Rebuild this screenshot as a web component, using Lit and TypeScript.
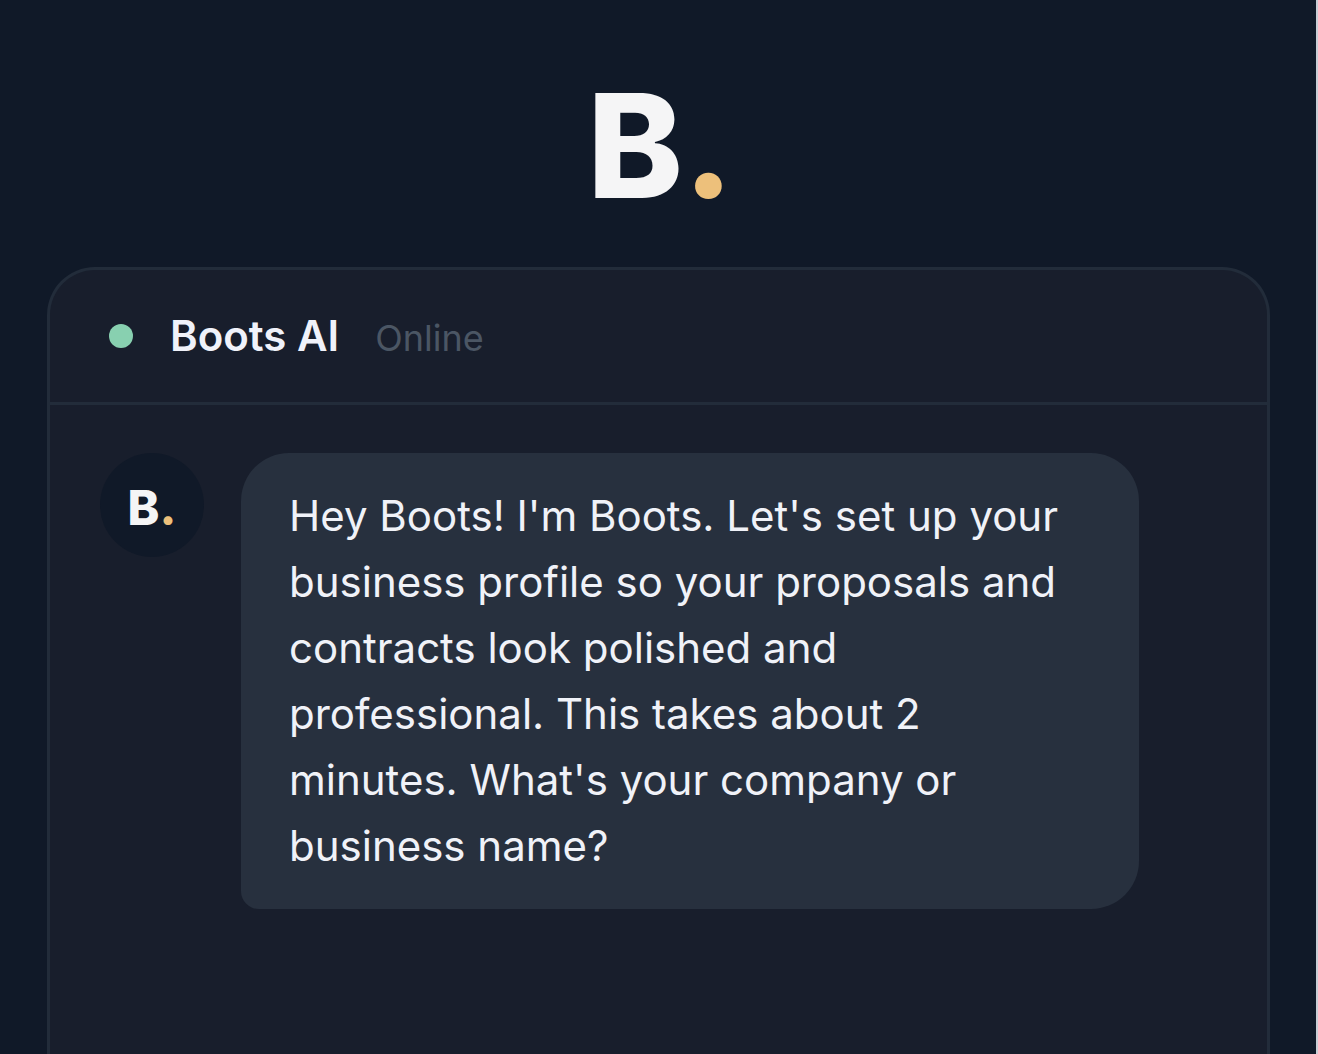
import { LitElement, html, css } from "lit";
import { customElement, property } from "lit/decorators.js";

@customElement("brand-mark")
class BrandMark extends LitElement {
  static styles = css`
    :host {
      display: block;
    }
    .mark {
      font-family: Inter, "Open Sans", sans-serif;
      font-weight: 800;
      color: #f5f5f6;
    }
    .large {
      font-size: 144px;
      line-height: 160px;
    }
    .small {
      font-size: 48px;
      line-height: 56px;
    }
    .dot {
      color: #edc07b;
    }
  `;

  @property() size = "large";

  render() {
    return html`<div class="mark ${this.size}">B<span class="dot">.</span></div>`;
  }
}

@customElement("app-root")
class AppRoot extends LitElement {
  static styles = css`
    :host {
      display: block;
      font-family: Inter, "Liberation Sans", sans-serif;
    }
    .page {
      box-sizing: border-box;
      height: 100vh;
      overflow: hidden;
      display: flex;
      flex-direction: column;
      padding: 0 46px 0 47px;
      border-right: 2px solid #c9ced6;
      background: #101928;
    }
    .top {
      flex: none;
      display: flex;
      justify-content: center;
      padding: 66px 0 41px 4px;
    }
    .card {
      flex: 1;
      border: 3px solid #222c3a;
      border-bottom: none;
      border-radius: 48px 48px 0 0;
      background: #181e2c;
    }
    .head {
      display: flex;
      align-items: center;
      gap: 37px;
      padding: 36px 59px;
      border-bottom: 3px solid #222c3a;
    }
    .title {
      display: flex;
      align-items: baseline;
      gap: 36px;
    }
    .status {
      width: 24px;
      height: 24px;
      border-radius: 50%;
      background: #88d0b0;
    }
    .name {
      font-size: 42px;
      line-height: 60px;
      font-weight: 600;
      color: #f0f2fa;
    }
    .state {
      font-size: 36px;
      line-height: 48px;
      color: #4b5664;
    }
    .thread {
      display: flex;
      align-items: flex-start;
      gap: 37px;
      padding: 48px 128px 48px 50px;
    }
    .avatar {
      flex: none;
      box-sizing: border-box;
      display: flex;
      align-items: center;
      justify-content: center;
      width: 104px;
      height: 104px;
      padding-top: 5px;
      border-radius: 50%;
      background: #101928;
    }
    .bubble {
      flex: 1;
      margin: 0;
      padding: 30px 48px;
      border-radius: 48px 48px 48px 18px;
      background: #27303e;
      color: #f0f2f8;
      font-size: 42px;
      line-height: 66px;
    }
  `;

  render() {
    return html`
      <div class="page">
        <header class="top"><brand-mark size="large"></brand-mark></header>
        <main class="card">
          <div class="head">
            <span class="status"></span>
            <div class="title">
              <span class="name">Boots AI</span>
              <span class="state">Online</span>
            </div>
          </div>
          <div class="thread">
            <div class="avatar"><brand-mark size="small"></brand-mark></div>
            <p class="bubble">
              Hey Boots! I'm Boots. Let's set up your business profile so your
              proposals and contracts look polished and professional. This
              takes about 2 minutes. What's your company or business name?
            </p>
          </div>
        </main>
      </div>
    `;
  }
}
